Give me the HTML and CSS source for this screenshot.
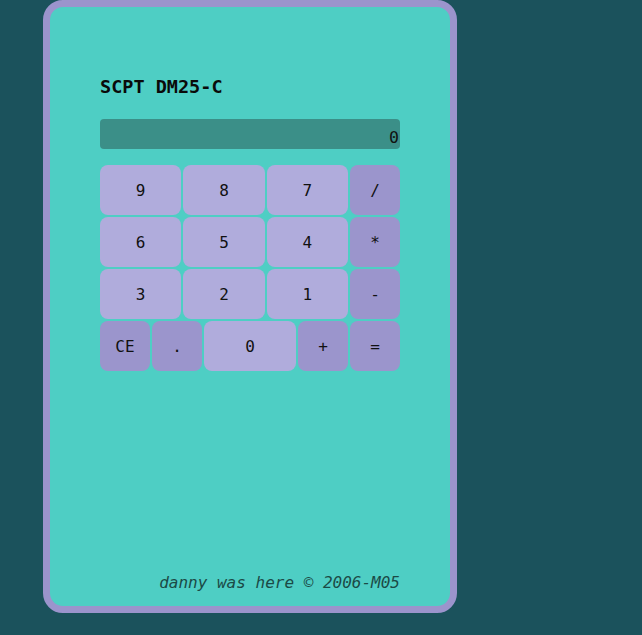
FILE: index.html
```html
<!DOCTYPE html>
<html>
<head>
<meta charset="utf-8">
<link rel="stylesheet" href="styles.css">
</head>
<body>
<div class="card">
  <h1 class="title">SCPT DM25-C</h1>
  <div class="display">0</div>
  <div class="keys">
    <div class="row">
      <button class="key num">9</button>
      <button class="key num">8</button>
      <button class="key num">7</button>
      <button class="key op">/</button>
    </div>
    <div class="row">
      <button class="key num">6</button>
      <button class="key num">5</button>
      <button class="key num">4</button>
      <button class="key op">*</button>
    </div>
    <div class="row">
      <button class="key num">3</button>
      <button class="key num">2</button>
      <button class="key num">1</button>
      <button class="key op">-</button>
    </div>
    <div class="row">
      <button class="key op">CE</button>
      <button class="key op">.</button>
      <button class="key num">0</button>
      <button class="key op">+</button>
      <button class="key op">=</button>
    </div>
  </div>
  <p class="footer">danny was here © 2006-M05</p>
</div>
</body>
</html>
```
FILE: styles.css
```css
html, body {
  margin: 0;
  padding: 0;
}
body {
  background: #1b525c;
  font-family: "DejaVu Sans Mono", "Liberation Mono", monospace;
  color: #111;
}
.card {
  box-sizing: border-box;
  margin-left: 43px;
  width: 414px;
  height: 613px;
  border: 7px solid #9b94cc;
  border-radius: 20px;
  background: #4ecec4;
  padding: 0 50px;
  display: flex;
  flex-direction: column;
}
.title {
  margin: 68px 0 0;
  font-size: 18.5px;
  line-height: 24px;
  font-weight: bold;
  color: #0a0a0a;
}
.display {
  margin-top: 20px;
  height: 30px;
  background: #3b8f88;
  border-radius: 4px;
  text-align: right;
  font-size: 16.5px;
  line-height: 38px;
  overflow: hidden;
  padding-right: 1px;
}
.keys {
  margin-top: 16px;
  display: flex;
  flex-direction: column;
  gap: 2px;
}
.row {
  display: flex;
  gap: 2px;
}
.key {
  font-family: inherit;
  font-size: 16px;
  color: #111;
  border: none;
  border-radius: 8px;
  height: 50px;
  padding: 0;
  margin: 0;
}
.num {
  flex: 1 1 0;
  background: #b0acdc;
}
.op {
  flex: 0 0 50px;
  width: 50px;
  background: #9b95cc;
}
.footer {
  margin: auto 0 13px;
  text-align: right;
  font-style: italic;
  font-size: 16px;
  line-height: 20px;
  color: #1b4a46;
}
```
